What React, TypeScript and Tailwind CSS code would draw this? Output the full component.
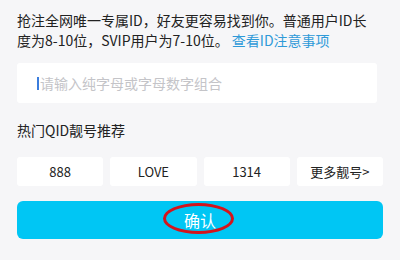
export default function App() {
  const picks = ["888", "LOVE", "1314", "更多靓号>"];

  return (
    <div className="w-[400px] h-[260px] bg-[#f6f6f8] px-[17px] pt-[10px] overflow-hidden font-['Noto_Sans_CJK_SC',sans-serif] text-[#222]">
      <p className="text-[14px] leading-[20px] w-[362px]">
        抢注全网唯一专属ID，好友更容易找到你。普通用户ID长度为8-10位，SVIP用户为7-10位。{" "}
        <span className="text-[#2f9ad8]">查看ID注意事项</span>
      </p>

      <div className="mt-[13px] h-[40px] w-[360px] bg-white rounded-[3px] flex items-center pl-[20px]">
        <span className="w-[2px] h-[13px] bg-[#3b7ddd] mr-[1px]"></span>
        <span className="text-[14px] text-[#c4c4c8]">请输入纯字母或字母数字组合</span>
      </div>

      <h2 className="mt-[17px] text-[14px] leading-[20px]">热门QID靓号推荐</h2>

      <div className="mt-[17px] grid grid-cols-4 gap-[7px] w-[366px]">
        {picks.map((p) => (
          <div key={p} className="h-[29px] bg-white rounded-[3px] flex items-center justify-center text-[13px]">
            {p}
          </div>
        ))}
      </div>

      <div className="relative mt-[15px] h-[38px] w-[366px] bg-[#00c6f4] rounded-[6px] flex items-center justify-center text-white text-[16px]">
        确认
        <div className="absolute left-[146px] top-[2px] w-[71px] h-[31px] rounded-[50%] border-[3px] border-[#d4141c]"></div>
      </div>
    </div>
  );
}
